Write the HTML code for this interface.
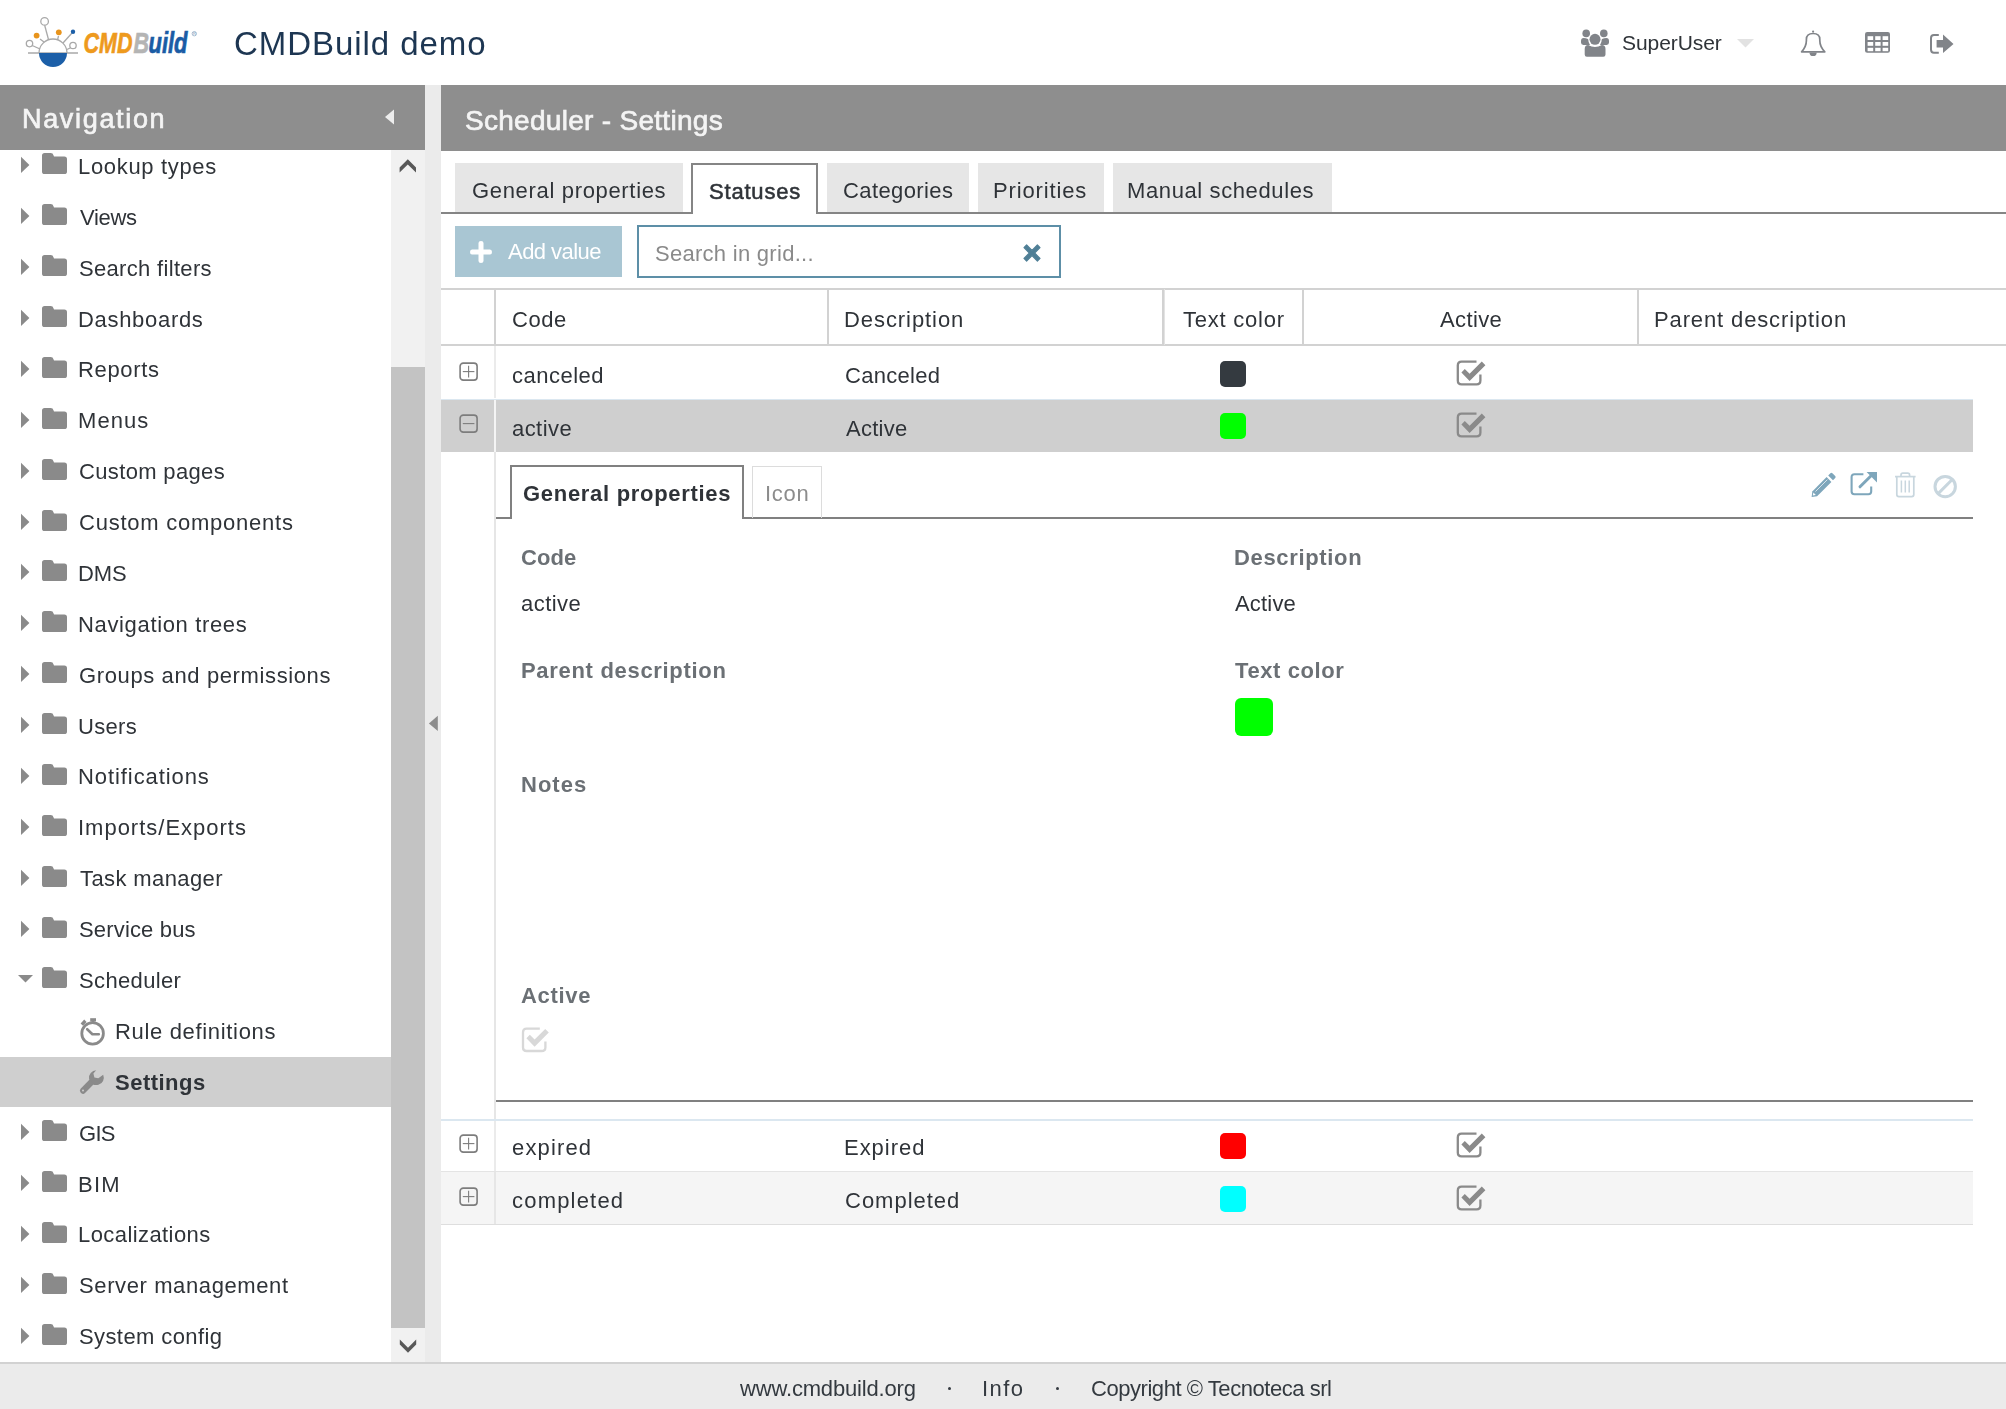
<!DOCTYPE html>
<html><head><meta charset="utf-8"><title>CMDBuild demo</title>
<style>
html,body{margin:0;padding:0;}
body{width:2006px;height:1409px;position:relative;overflow:hidden;background:#fff;font-family:'Liberation Sans', sans-serif;}
.t{position:absolute;white-space:pre;will-change:transform;}
.r{position:absolute;}
svg.i{position:absolute;overflow:visible;}
</style></head><body>
<svg class="i" style="left:20px;top:10px" width="190" height="65" viewBox="0 0 190 65">
<g stroke="#a9a9a9" stroke-width="1.3" fill="none">
<line x1="8" y1="43" x2="58" y2="43"/>
<path d="M19 43 A14 14 0 0 1 47 43"/>
<line x1="24.6" y1="15" x2="28.5" y2="29.5"/>
<line x1="20" y1="29" x2="24" y2="32"/>
<line x1="38.5" y1="26" x2="37.5" y2="30"/>
<line x1="52" y1="23" x2="43" y2="33"/>
<line x1="12.2" y1="35.5" x2="20" y2="39"/>
<line x1="50" y1="38" x2="47" y2="39.5"/>
<circle cx="24.6" cy="11.4" r="3.8" fill="#fff"/>
<circle cx="9.5" cy="33.6" r="3.2" fill="#fff"/>
<circle cx="53" cy="35.5" r="3.2" fill="#fff"/>
</g>
<path d="M19 43 A14 14 0 0 0 47 43 Z" fill="#1c5fa8"/>
<circle cx="16.6" cy="25.6" r="2.9" fill="#e8941c"/>
<circle cx="38.8" cy="22.3" r="2.9" fill="#e8941c"/>
<circle cx="53" cy="21.8" r="2.2" fill="#1c5fa8"/>
<text x="63.5" y="43.2" font-family="Liberation Sans" font-weight="700" font-style="italic" font-size="30" textLength="49" lengthAdjust="spacingAndGlyphs" fill="#ee9a1d" stroke="#ee9a1d" stroke-width="0.7">CMD</text>
<text x="113.5" y="43.2" font-family="Liberation Sans" font-weight="700" font-style="italic" font-size="30" textLength="15.5" lengthAdjust="spacingAndGlyphs" fill="#b4b4b4" stroke="#b4b4b4" stroke-width="0.7">B</text>
<text x="128.5" y="43.2" font-family="Liberation Sans" font-weight="700" font-style="italic" font-size="30" textLength="39" lengthAdjust="spacingAndGlyphs" fill="#1a5ca5" stroke="#1a5ca5" stroke-width="0.7">uild</text>
<circle cx="174.3" cy="23.7" r="2.2" fill="none" stroke="#6f93b5" stroke-width="0.6"/><text x="172.9" y="25.3" font-family="Liberation Sans" font-size="4" fill="#6f93b5">R</text>
</svg>
<svg class="i" style="left:1575px;top:25px" width="40" height="37" viewBox="0 0 40 37">
<circle cx="11.2" cy="8.4" r="3.8" fill="#818489"/>
<circle cx="28.8" cy="8.4" r="3.8" fill="#818489"/>
<path d="M6 16 Q6 13.1 8.6 13.1 Q10.6 13.1 13.6 14.2 Q13 17.5 15 20 H8.4 Q6 20 6 17.6 Z" fill="#818489"/>
<path d="M34 16 Q34 13.1 31.4 13.1 Q29.4 13.1 26.4 14.2 Q27 17.5 25 20 H31.6 Q34 20 34 17.6 Z" fill="#818489"/>
<circle cx="20" cy="14.3" r="6.6" fill="#fff"/>
<circle cx="20" cy="14.3" r="5.5" fill="#818489"/>
<path d="M9.7 24 Q9.7 20 13.2 20 Q16.5 22 20 22 Q23.5 22 26.8 20 Q30.5 20 30.5 24 V29.6 Q30.5 31.8 28.3 31.8 H11.9 Q9.7 31.8 9.7 29.6 Z" fill="#818489"/>
</svg>
<svg class="i" style="left:1736px;top:38px" width="20" height="10" viewBox="0 0 20 10"><path d="M1 1 H18 L9.5 9.5 Z" fill="#e2e2e2"/></svg>
<svg class="i" style="left:1795px;top:25px" width="40" height="37" viewBox="0 0 40 37">
<path d="M6.6 26.8 C9.6 23.6 11.4 20.2 11.4 15.6 V14.4 C11.4 10.4 14 8.5 18.1 8.5 C22.2 8.5 24.8 10.4 24.8 14.4 V15.6 C24.8 20.2 26.6 23.6 29.8 26.8 Z" fill="none" stroke="#818489" stroke-width="1.7" stroke-linejoin="round"/>
<circle cx="18.1" cy="6.6" r="1.1" fill="#818489"/>
<path d="M14.5 27.4 A3.6 3.6 0 0 0 21.7 27.4 Z" fill="#818489"/>
</svg>
<svg class="i" style="left:1865px;top:31px" width="26" height="23" viewBox="0 0 26 23">
<rect x="0" y="1" width="25" height="20.8" rx="2.2" fill="#818489"/>
<g fill="#fff"><rect x="2.6" y="5.2" width="5.6" height="3.8"/><rect x="2.6" y="11" width="5.6" height="3.8"/><rect x="2.6" y="16.8" width="5.6" height="3.4"/><rect x="10.2" y="5.2" width="5.4" height="3.8"/><rect x="10.2" y="11" width="5.4" height="3.8"/><rect x="10.2" y="16.8" width="5.4" height="3.4"/><rect x="17.6" y="5.2" width="5.6" height="3.8"/><rect x="17.6" y="11" width="5.6" height="3.8"/><rect x="17.6" y="16.8" width="5.6" height="3.4"/></g>
</svg>
<svg class="i" style="left:1928px;top:32px" width="28" height="23" viewBox="0 0 28 23">
<path d="M10.8 2.9 H6 Q3 2.9 3 6 V17.6 Q3 20.8 6 20.8 H10.8" fill="none" stroke="#818489" stroke-width="2"/>
<path d="M8.6 8 H15 V2.6 L25.5 11.9 L15 21 V15.4 H8.6 Z" fill="#818489"/>
</svg>
<div class="r" style="left:0px;top:85px;width:425px;height:65px;background:#8e8e8e;"></div>
<div class="r" style="left:441px;top:85px;width:1565px;height:66px;background:#8e8e8e;"></div>
<div class="r" style="left:425px;top:85px;width:16px;height:1277px;background:#ebebeb;"></div>
<svg class="i" style="left:383px;top:108px" width="13" height="19" viewBox="0 0 13 19"><path d="M11 1.5 V16.5 L2 9 Z" fill="#ededed"/></svg>
<div class="r" style="left:391px;top:150px;width:34px;height:1212px;background:#f1f1f1;"></div>
<div class="r" style="left:391px;top:367px;width:34px;height:961px;background:#c3c3c3;"></div>
<svg class="i" style="left:398px;top:157px" width="20" height="18" viewBox="0 0 20 18"><path d="M1.6 15.5 L9.8 7.4 L18 15.5 V10.5 L9.8 2.2 L1.6 10.5 Z" fill="#585858"/></svg>
<svg class="i" style="left:398px;top:1337px" width="20" height="18" viewBox="0 0 20 18"><path d="M1.8 2.6 L10 10.8 L18.2 2.6 V7.6 L10 15.8 L1.8 7.6 Z" fill="#585858"/></svg>
<svg class="i" style="left:427px;top:714px" width="13" height="19" viewBox="0 0 13 19"><path d="M10.8 1.8 V17 L1.9 9.4 Z" fill="#8c8c8c"/></svg>
<div class="r" style="left:0px;top:1057px;width:391px;height:50px;background:#cfcfcf;"></div>
<div class="r" style="left:0px;top:1362px;width:2006px;height:47px;background:#ebebeb;"></div>
<div class="r" style="left:0px;top:1362px;width:2006px;height:2px;background:#d2d2d2;"></div>
<svg class="i" style="left:20px;top:156px" width="11" height="18" viewBox="0 0 11 18"><path d="M1 0.8 L9.4 8.9 L1 17 Z" fill="#8a8a8a"/></svg>
<svg class="i" style="left:41px;top:152px" width="27" height="23" viewBox="0 0 27 23"><path d="M1 3.6 Q1 1 3.6 1 H9.6 Q12 1 12.6 3.4 L13 4.6 H23.3 Q26 4.6 26 7.3 V19.4 Q26 22 23.3 22 H3.6 Q1 22 1 19.4 Z" fill="#8a8a8a"/></svg>
<svg class="i" style="left:20px;top:207px" width="11" height="18" viewBox="0 0 11 18"><path d="M1 0.8 L9.4 8.9 L1 17 Z" fill="#8a8a8a"/></svg>
<svg class="i" style="left:41px;top:203px" width="27" height="23" viewBox="0 0 27 23"><path d="M1 3.6 Q1 1 3.6 1 H9.6 Q12 1 12.6 3.4 L13 4.6 H23.3 Q26 4.6 26 7.3 V19.4 Q26 22 23.3 22 H3.6 Q1 22 1 19.4 Z" fill="#8a8a8a"/></svg>
<svg class="i" style="left:20px;top:258px" width="11" height="18" viewBox="0 0 11 18"><path d="M1 0.8 L9.4 8.9 L1 17 Z" fill="#8a8a8a"/></svg>
<svg class="i" style="left:41px;top:254px" width="27" height="23" viewBox="0 0 27 23"><path d="M1 3.6 Q1 1 3.6 1 H9.6 Q12 1 12.6 3.4 L13 4.6 H23.3 Q26 4.6 26 7.3 V19.4 Q26 22 23.3 22 H3.6 Q1 22 1 19.4 Z" fill="#8a8a8a"/></svg>
<svg class="i" style="left:20px;top:309px" width="11" height="18" viewBox="0 0 11 18"><path d="M1 0.8 L9.4 8.9 L1 17 Z" fill="#8a8a8a"/></svg>
<svg class="i" style="left:41px;top:305px" width="27" height="23" viewBox="0 0 27 23"><path d="M1 3.6 Q1 1 3.6 1 H9.6 Q12 1 12.6 3.4 L13 4.6 H23.3 Q26 4.6 26 7.3 V19.4 Q26 22 23.3 22 H3.6 Q1 22 1 19.4 Z" fill="#8a8a8a"/></svg>
<svg class="i" style="left:20px;top:360px" width="11" height="18" viewBox="0 0 11 18"><path d="M1 0.8 L9.4 8.9 L1 17 Z" fill="#8a8a8a"/></svg>
<svg class="i" style="left:41px;top:356px" width="27" height="23" viewBox="0 0 27 23"><path d="M1 3.6 Q1 1 3.6 1 H9.6 Q12 1 12.6 3.4 L13 4.6 H23.3 Q26 4.6 26 7.3 V19.4 Q26 22 23.3 22 H3.6 Q1 22 1 19.4 Z" fill="#8a8a8a"/></svg>
<svg class="i" style="left:20px;top:411px" width="11" height="18" viewBox="0 0 11 18"><path d="M1 0.8 L9.4 8.9 L1 17 Z" fill="#8a8a8a"/></svg>
<svg class="i" style="left:41px;top:407px" width="27" height="23" viewBox="0 0 27 23"><path d="M1 3.6 Q1 1 3.6 1 H9.6 Q12 1 12.6 3.4 L13 4.6 H23.3 Q26 4.6 26 7.3 V19.4 Q26 22 23.3 22 H3.6 Q1 22 1 19.4 Z" fill="#8a8a8a"/></svg>
<svg class="i" style="left:20px;top:462px" width="11" height="18" viewBox="0 0 11 18"><path d="M1 0.8 L9.4 8.9 L1 17 Z" fill="#8a8a8a"/></svg>
<svg class="i" style="left:41px;top:458px" width="27" height="23" viewBox="0 0 27 23"><path d="M1 3.6 Q1 1 3.6 1 H9.6 Q12 1 12.6 3.4 L13 4.6 H23.3 Q26 4.6 26 7.3 V19.4 Q26 22 23.3 22 H3.6 Q1 22 1 19.4 Z" fill="#8a8a8a"/></svg>
<svg class="i" style="left:20px;top:513px" width="11" height="18" viewBox="0 0 11 18"><path d="M1 0.8 L9.4 8.9 L1 17 Z" fill="#8a8a8a"/></svg>
<svg class="i" style="left:41px;top:509px" width="27" height="23" viewBox="0 0 27 23"><path d="M1 3.6 Q1 1 3.6 1 H9.6 Q12 1 12.6 3.4 L13 4.6 H23.3 Q26 4.6 26 7.3 V19.4 Q26 22 23.3 22 H3.6 Q1 22 1 19.4 Z" fill="#8a8a8a"/></svg>
<svg class="i" style="left:20px;top:563px" width="11" height="18" viewBox="0 0 11 18"><path d="M1 0.8 L9.4 8.9 L1 17 Z" fill="#8a8a8a"/></svg>
<svg class="i" style="left:41px;top:559px" width="27" height="23" viewBox="0 0 27 23"><path d="M1 3.6 Q1 1 3.6 1 H9.6 Q12 1 12.6 3.4 L13 4.6 H23.3 Q26 4.6 26 7.3 V19.4 Q26 22 23.3 22 H3.6 Q1 22 1 19.4 Z" fill="#8a8a8a"/></svg>
<svg class="i" style="left:20px;top:614px" width="11" height="18" viewBox="0 0 11 18"><path d="M1 0.8 L9.4 8.9 L1 17 Z" fill="#8a8a8a"/></svg>
<svg class="i" style="left:41px;top:610px" width="27" height="23" viewBox="0 0 27 23"><path d="M1 3.6 Q1 1 3.6 1 H9.6 Q12 1 12.6 3.4 L13 4.6 H23.3 Q26 4.6 26 7.3 V19.4 Q26 22 23.3 22 H3.6 Q1 22 1 19.4 Z" fill="#8a8a8a"/></svg>
<svg class="i" style="left:20px;top:665px" width="11" height="18" viewBox="0 0 11 18"><path d="M1 0.8 L9.4 8.9 L1 17 Z" fill="#8a8a8a"/></svg>
<svg class="i" style="left:41px;top:661px" width="27" height="23" viewBox="0 0 27 23"><path d="M1 3.6 Q1 1 3.6 1 H9.6 Q12 1 12.6 3.4 L13 4.6 H23.3 Q26 4.6 26 7.3 V19.4 Q26 22 23.3 22 H3.6 Q1 22 1 19.4 Z" fill="#8a8a8a"/></svg>
<svg class="i" style="left:20px;top:716px" width="11" height="18" viewBox="0 0 11 18"><path d="M1 0.8 L9.4 8.9 L1 17 Z" fill="#8a8a8a"/></svg>
<svg class="i" style="left:41px;top:712px" width="27" height="23" viewBox="0 0 27 23"><path d="M1 3.6 Q1 1 3.6 1 H9.6 Q12 1 12.6 3.4 L13 4.6 H23.3 Q26 4.6 26 7.3 V19.4 Q26 22 23.3 22 H3.6 Q1 22 1 19.4 Z" fill="#8a8a8a"/></svg>
<svg class="i" style="left:20px;top:767px" width="11" height="18" viewBox="0 0 11 18"><path d="M1 0.8 L9.4 8.9 L1 17 Z" fill="#8a8a8a"/></svg>
<svg class="i" style="left:41px;top:763px" width="27" height="23" viewBox="0 0 27 23"><path d="M1 3.6 Q1 1 3.6 1 H9.6 Q12 1 12.6 3.4 L13 4.6 H23.3 Q26 4.6 26 7.3 V19.4 Q26 22 23.3 22 H3.6 Q1 22 1 19.4 Z" fill="#8a8a8a"/></svg>
<svg class="i" style="left:20px;top:818px" width="11" height="18" viewBox="0 0 11 18"><path d="M1 0.8 L9.4 8.9 L1 17 Z" fill="#8a8a8a"/></svg>
<svg class="i" style="left:41px;top:814px" width="27" height="23" viewBox="0 0 27 23"><path d="M1 3.6 Q1 1 3.6 1 H9.6 Q12 1 12.6 3.4 L13 4.6 H23.3 Q26 4.6 26 7.3 V19.4 Q26 22 23.3 22 H3.6 Q1 22 1 19.4 Z" fill="#8a8a8a"/></svg>
<svg class="i" style="left:20px;top:869px" width="11" height="18" viewBox="0 0 11 18"><path d="M1 0.8 L9.4 8.9 L1 17 Z" fill="#8a8a8a"/></svg>
<svg class="i" style="left:41px;top:865px" width="27" height="23" viewBox="0 0 27 23"><path d="M1 3.6 Q1 1 3.6 1 H9.6 Q12 1 12.6 3.4 L13 4.6 H23.3 Q26 4.6 26 7.3 V19.4 Q26 22 23.3 22 H3.6 Q1 22 1 19.4 Z" fill="#8a8a8a"/></svg>
<svg class="i" style="left:20px;top:920px" width="11" height="18" viewBox="0 0 11 18"><path d="M1 0.8 L9.4 8.9 L1 17 Z" fill="#8a8a8a"/></svg>
<svg class="i" style="left:41px;top:916px" width="27" height="23" viewBox="0 0 27 23"><path d="M1 3.6 Q1 1 3.6 1 H9.6 Q12 1 12.6 3.4 L13 4.6 H23.3 Q26 4.6 26 7.3 V19.4 Q26 22 23.3 22 H3.6 Q1 22 1 19.4 Z" fill="#8a8a8a"/></svg>
<svg class="i" style="left:17px;top:973px" width="18" height="10" viewBox="0 0 18 10"><path d="M1 2 H16 L8.5 9.5 Z" fill="#8a8a8a"/></svg>
<svg class="i" style="left:41px;top:966px" width="27" height="23" viewBox="0 0 27 23"><path d="M1 3.6 Q1 1 3.6 1 H9.6 Q12 1 12.6 3.4 L13 4.6 H23.3 Q26 4.6 26 7.3 V19.4 Q26 22 23.3 22 H3.6 Q1 22 1 19.4 Z" fill="#8a8a8a"/></svg>
<svg class="i" style="left:20px;top:1123px" width="11" height="18" viewBox="0 0 11 18"><path d="M1 0.8 L9.4 8.9 L1 17 Z" fill="#8a8a8a"/></svg>
<svg class="i" style="left:41px;top:1119px" width="27" height="23" viewBox="0 0 27 23"><path d="M1 3.6 Q1 1 3.6 1 H9.6 Q12 1 12.6 3.4 L13 4.6 H23.3 Q26 4.6 26 7.3 V19.4 Q26 22 23.3 22 H3.6 Q1 22 1 19.4 Z" fill="#8a8a8a"/></svg>
<svg class="i" style="left:20px;top:1174px" width="11" height="18" viewBox="0 0 11 18"><path d="M1 0.8 L9.4 8.9 L1 17 Z" fill="#8a8a8a"/></svg>
<svg class="i" style="left:41px;top:1170px" width="27" height="23" viewBox="0 0 27 23"><path d="M1 3.6 Q1 1 3.6 1 H9.6 Q12 1 12.6 3.4 L13 4.6 H23.3 Q26 4.6 26 7.3 V19.4 Q26 22 23.3 22 H3.6 Q1 22 1 19.4 Z" fill="#8a8a8a"/></svg>
<svg class="i" style="left:20px;top:1225px" width="11" height="18" viewBox="0 0 11 18"><path d="M1 0.8 L9.4 8.9 L1 17 Z" fill="#8a8a8a"/></svg>
<svg class="i" style="left:41px;top:1221px" width="27" height="23" viewBox="0 0 27 23"><path d="M1 3.6 Q1 1 3.6 1 H9.6 Q12 1 12.6 3.4 L13 4.6 H23.3 Q26 4.6 26 7.3 V19.4 Q26 22 23.3 22 H3.6 Q1 22 1 19.4 Z" fill="#8a8a8a"/></svg>
<svg class="i" style="left:20px;top:1276px" width="11" height="18" viewBox="0 0 11 18"><path d="M1 0.8 L9.4 8.9 L1 17 Z" fill="#8a8a8a"/></svg>
<svg class="i" style="left:41px;top:1272px" width="27" height="23" viewBox="0 0 27 23"><path d="M1 3.6 Q1 1 3.6 1 H9.6 Q12 1 12.6 3.4 L13 4.6 H23.3 Q26 4.6 26 7.3 V19.4 Q26 22 23.3 22 H3.6 Q1 22 1 19.4 Z" fill="#8a8a8a"/></svg>
<svg class="i" style="left:20px;top:1327px" width="11" height="18" viewBox="0 0 11 18"><path d="M1 0.8 L9.4 8.9 L1 17 Z" fill="#8a8a8a"/></svg>
<svg class="i" style="left:41px;top:1323px" width="27" height="23" viewBox="0 0 27 23"><path d="M1 3.6 Q1 1 3.6 1 H9.6 Q12 1 12.6 3.4 L13 4.6 H23.3 Q26 4.6 26 7.3 V19.4 Q26 22 23.3 22 H3.6 Q1 22 1 19.4 Z" fill="#8a8a8a"/></svg>
<svg class="i" style="left:78px;top:1016px" width="30" height="32" viewBox="0 0 30 32">
<circle cx="14.6" cy="17.4" r="10.8" fill="none" stroke="#8a8a8a" stroke-width="2.8"/>
<rect x="12.2" y="2.2" width="5.8" height="3.2" fill="#8a8a8a"/>
<rect x="13.6" y="4.4" width="2.8" height="2.4" fill="#8a8a8a"/>
<path d="M2.6 7.4 L6.2 3.6 L8.6 6 L5 9.8 Z" fill="#8a8a8a"/>
<path d="M9.2 13.2 L14.4 18.2 L20.8 18.2" fill="none" stroke="#8a8a8a" stroke-width="2.6" stroke-linecap="round" stroke-linejoin="round"/>
</svg>
<svg class="i" style="left:78px;top:1068px" width="28" height="29" viewBox="0 0 28 29">
<path d="M25.2 6.8 A7.4 7.4 0 1 1 18.2 2.3 L15.4 5.6 L16.4 9.4 L20.3 10.2 Z" fill="#8a8a8a"/>
<path d="M11.6 11.4 L2.6 20.8 Q1 22.6 2.6 24.4 L3.4 25.2 Q5.2 26.8 7 25 L16.2 15.8 Z" fill="#8a8a8a"/>
<circle cx="5" cy="22.6" r="1" fill="#cfcfcf"/>
</svg>
<div class="r" style="left:455px;top:163px;width:228px;height:50px;background:#e6e6e6;"></div>
<div class="r" style="left:827px;top:163px;width:142px;height:50px;background:#e6e6e6;"></div>
<div class="r" style="left:978px;top:163px;width:126px;height:50px;background:#e6e6e6;"></div>
<div class="r" style="left:1113px;top:163px;width:219px;height:50px;background:#e6e6e6;"></div>
<div class="r" style="left:441px;top:212px;width:251px;height:2px;background:#858585;"></div>
<div class="r" style="left:818px;top:212px;width:1188px;height:2px;background:#858585;"></div>
<div class="r" style="left:691px;top:163px;width:2px;height:51px;background:#858585;"></div>
<div class="r" style="left:816px;top:163px;width:2px;height:51px;background:#858585;"></div>
<div class="r" style="left:691px;top:163px;width:127px;height:2px;background:#858585;"></div>
<div class="r" style="left:455px;top:226px;width:167px;height:51px;background:#a9c6d3;"></div>
<svg class="i" style="left:468px;top:239px" width="26" height="26" viewBox="0 0 26 26"><path d="M10.5 4 Q10.5 2 13 2 Q15.5 2 15.5 4 V10.5 H22 Q24 10.5 24 13 Q24 15.5 22 15.5 H15.5 V22 Q15.5 24 13 24 Q10.5 24 10.5 22 V15.5 H4 Q2 15.5 2 13 Q2 10.5 4 10.5 H10.5 Z" fill="#fff"/></svg>
<div class="r" style="left:637px;top:225px;width:424px;height:53px;background:#fff;box-sizing:border-box;border:2px solid #5d8fa7;"></div>
<svg class="i" style="left:1020px;top:241px" width="24" height="22" viewBox="0 0 24 22"><path d="M4 6.6 L6.6 4 L12 9.4 L17.4 4 L20 6.6 L14.6 12 L20 17.4 L17.4 20 L12 14.6 L6.6 20 L4 17.4 L9.4 12 Z" fill="#4f7f96" stroke="#4f7f96" stroke-width="1.2" stroke-linejoin="round"/></svg>
<div class="r" style="left:441px;top:288px;width:1565px;height:2px;background:#d2d2d2;"></div>
<div class="r" style="left:441px;top:344px;width:1565px;height:2px;background:#d2d2d2;"></div>
<div class="r" style="left:494px;top:289px;width:2px;height:56px;background:#d2d2d2;"></div>
<div class="r" style="left:827px;top:289px;width:2px;height:56px;background:#d2d2d2;"></div>
<div class="r" style="left:1162px;top:289px;width:2px;height:56px;background:#d2d2d2;"></div>
<div class="r" style="left:1302px;top:289px;width:2px;height:56px;background:#d2d2d2;"></div>
<div class="r" style="left:1637px;top:289px;width:2px;height:56px;background:#d2d2d2;"></div>
<div class="r" style="left:1164px;top:289px;width:1px;height:56px;background:#e3e3e3;"></div>
<div class="r" style="left:494px;top:346px;width:2px;height:52px;background:#ebebeb;"></div>
<svg class="i" style="left:459px;top:362px" width="20" height="20" viewBox="0 0 20 20"><rect x="1.1" y="1.1" width="17" height="17" rx="3.2" fill="none" stroke="#7d7d7d" stroke-width="1.6"/><line x1="3.8" y1="9.6" x2="15.4" y2="9.6" stroke="#7d7d7d" stroke-width="1.1"/><line x1="9.6" y1="3.8" x2="9.6" y2="15.4" stroke="#7d7d7d" stroke-width="1.1"/></svg>
<div class="r" style="left:1220px;top:361px;width:26px;height:26px;background:#343a40;border-radius:5px;"></div>
<svg class="i" style="left:1456px;top:360px" width="31" height="27" viewBox="0 0 31 27">
<path d="M20.5 1.6 H5.6 Q1.8 1.6 1.8 5.4 V20.6 Q1.8 24.4 5.6 24.4 H20.6 Q24.4 24.4 24.4 20.6 V14.4" fill="none" stroke="#8a8a8a" stroke-width="2.3"/>
<path d="M5.4 11.2 L8.8 7.8 L13.6 12.6 L25.8 0.4 L29.4 4 L13.6 19.8 Z" fill="#8a8a8a" transform="translate(0,1.2)"/></svg>
<div class="r" style="left:441px;top:399px;width:1532px;height:1px;background:#dbe7f0;"></div>
<div class="r" style="left:441px;top:400px;width:1532px;height:52px;background:#cfcfcf;"></div>
<div class="r" style="left:494px;top:400px;width:2px;height:52px;background:#f4f4f4;"></div>
<svg class="i" style="left:459px;top:414px" width="20" height="20" viewBox="0 0 20 20"><rect x="1.1" y="1.1" width="17" height="17" rx="3.2" fill="none" stroke="#7d7d7d" stroke-width="1.6"/><line x1="3.8" y1="9.6" x2="15.4" y2="9.6" stroke="#7d7d7d" stroke-width="1.1"/></svg>
<div class="r" style="left:1220px;top:413px;width:26px;height:26px;background:#00ff00;border-radius:5px;"></div>
<svg class="i" style="left:1456px;top:412px" width="31" height="27" viewBox="0 0 31 27">
<path d="M20.5 1.6 H5.6 Q1.8 1.6 1.8 5.4 V20.6 Q1.8 24.4 5.6 24.4 H20.6 Q24.4 24.4 24.4 20.6 V14.4" fill="none" stroke="#8a8a8a" stroke-width="2.3"/>
<path d="M5.4 11.2 L8.8 7.8 L13.6 12.6 L25.8 0.4 L29.4 4 L13.6 19.8 Z" fill="#8a8a8a" transform="translate(0,1.2)"/></svg>
<div class="r" style="left:494px;top:452px;width:2px;height:668px;background:#e6e6e6;"></div>
<div class="r" style="left:496px;top:517px;width:15px;height:2px;background:#808080;"></div>
<div class="r" style="left:743px;top:517px;width:1230px;height:2px;background:#808080;"></div>
<div class="r" style="left:510px;top:465px;width:2px;height:54px;background:#808080;"></div>
<div class="r" style="left:742px;top:465px;width:2px;height:54px;background:#808080;"></div>
<div class="r" style="left:510px;top:465px;width:234px;height:2px;background:#808080;"></div>
<div class="r" style="left:752px;top:466px;width:70px;height:52px;background:transparent;box-sizing:border-box;border:1.5px solid #dcdcdc;border-bottom:none;"></div>
<svg class="i" style="left:1810px;top:472px" width="27" height="27" viewBox="0 0 27 27">
<path d="M2.3 19.4 L16.6 5.1 L21.4 9.9 L7.1 24.2 L1.6 24.9 Z" fill="#7ea6bb"/>
<path d="M18.2 3.5 L20.4 1.3 Q21.4 0.3 22.4 1.3 L25.2 4.1 Q26.2 5.1 25.2 6.1 L23 8.3 Z" fill="#7ea6bb"/>
<line x1="5.5" y1="19.5" x2="17.4" y2="7.6" stroke="#fff" stroke-width="0.7"/>
<path d="M3.4 20.6 L5.8 23 L2.8 23.6 Z" fill="#fff"/>
</svg>
<svg class="i" style="left:1849px;top:470px" width="30" height="27" viewBox="0 0 30 27">
<path d="M14.4 4.2 H5.4 Q2.6 4.2 2.6 7 V21.6 Q2.6 24.2 5.4 24.2 H19.4 Q22.2 24.2 22.2 21.6 V16.6" fill="none" stroke="#7ea6bb" stroke-width="2.1"/>
<path d="M11 16.8 L21.6 6.2" stroke="#7ea6bb" stroke-width="3" stroke-linecap="round"/>
<path d="M17.6 2 H28 V12.4 Z" fill="#7ea6bb"/>
</svg>
<svg class="i" style="left:1893px;top:472px" width="24" height="27" viewBox="0 0 24 27">
<path d="M2 4.6 H22.6" stroke="#c8d6de" stroke-width="1.7"/>
<path d="M8 4.4 V3 Q8 1.2 9.8 1.2 H14.8 Q16.6 1.2 16.6 3 V4.4" fill="none" stroke="#c8d6de" stroke-width="1.7"/>
<path d="M3.8 5 V22.6 Q3.8 24.6 5.8 24.6 H18.8 Q20.8 24.6 20.8 22.6 V5" fill="none" stroke="#c8d6de" stroke-width="1.7"/>
<path d="M8.4 8.6 V20.4 M12.3 8.6 V20.4 M16.2 8.6 V20.4" stroke="#c8d6de" stroke-width="1.5"/>
</svg>
<svg class="i" style="left:1932px;top:474px" width="26" height="26" viewBox="0 0 26 26">
<circle cx="13.2" cy="12.6" r="10.2" fill="none" stroke="#c8d6de" stroke-width="3"/>
<path d="M6.4 19.4 L20 5.8" stroke="#c8d6de" stroke-width="3"/>
</svg>
<div class="r" style="left:1235px;top:698px;width:38px;height:38px;background:#00ff00;border-radius:6px;"></div>
<svg class="i" style="left:521px;top:1026px" width="31" height="28" viewBox="0 0 31 28">
<path d="M18.8 2.6 H5.6 Q2 2.6 2 6.2 V21.4 Q2 25 5.6 25 H20.6 Q24.4 25 24.4 21.4 V15.6" fill="none" stroke="#d8d8d8" stroke-width="2.3"/>
<path d="M5.4 12.2 L8.8 8.8 L13.6 13.6 L24.2 3 L27.8 6.6 L13.6 20.8 Z" fill="#d8d8d8"/></svg>
<div class="r" style="left:496px;top:1100px;width:1477px;height:2px;background:#808080;"></div>
<div class="r" style="left:441px;top:1119px;width:1532px;height:2px;background:#dbe7f0;"></div>
<div class="r" style="left:494px;top:1121px;width:2px;height:50px;background:#ebebeb;"></div>
<div class="r" style="left:441px;top:1171px;width:1532px;height:1px;background:#e4e4e4;"></div>
<svg class="i" style="left:459px;top:1134px" width="20" height="20" viewBox="0 0 20 20"><rect x="1.1" y="1.1" width="17" height="17" rx="3.2" fill="none" stroke="#7d7d7d" stroke-width="1.6"/><line x1="3.8" y1="9.6" x2="15.4" y2="9.6" stroke="#7d7d7d" stroke-width="1.1"/><line x1="9.6" y1="3.8" x2="9.6" y2="15.4" stroke="#7d7d7d" stroke-width="1.1"/></svg>
<div class="r" style="left:1220px;top:1133px;width:26px;height:26px;background:#ff0000;border-radius:5px;"></div>
<svg class="i" style="left:1456px;top:1132px" width="31" height="27" viewBox="0 0 31 27">
<path d="M20.5 1.6 H5.6 Q1.8 1.6 1.8 5.4 V20.6 Q1.8 24.4 5.6 24.4 H20.6 Q24.4 24.4 24.4 20.6 V14.4" fill="none" stroke="#8a8a8a" stroke-width="2.3"/>
<path d="M5.4 11.2 L8.8 7.8 L13.6 12.6 L25.8 0.4 L29.4 4 L13.6 19.8 Z" fill="#8a8a8a" transform="translate(0,1.2)"/></svg>
<div class="r" style="left:441px;top:1172px;width:1532px;height:52px;background:#f5f5f5;"></div>
<div class="r" style="left:494px;top:1172px;width:2px;height:52px;background:#e6e6e6;"></div>
<div class="r" style="left:441px;top:1224px;width:1532px;height:1px;background:#dedede;"></div>
<svg class="i" style="left:459px;top:1187px" width="20" height="20" viewBox="0 0 20 20"><rect x="1.1" y="1.1" width="17" height="17" rx="3.2" fill="none" stroke="#7d7d7d" stroke-width="1.6"/><line x1="3.8" y1="9.6" x2="15.4" y2="9.6" stroke="#7d7d7d" stroke-width="1.1"/><line x1="9.6" y1="3.8" x2="9.6" y2="15.4" stroke="#7d7d7d" stroke-width="1.1"/></svg>
<div class="r" style="left:1220px;top:1186px;width:26px;height:26px;background:#00ffff;border-radius:5px;"></div>
<svg class="i" style="left:1456px;top:1185px" width="31" height="27" viewBox="0 0 31 27">
<path d="M20.5 1.6 H5.6 Q1.8 1.6 1.8 5.4 V20.6 Q1.8 24.4 5.6 24.4 H20.6 Q24.4 24.4 24.4 20.6 V14.4" fill="none" stroke="#8a8a8a" stroke-width="2.3"/>
<path d="M5.4 11.2 L8.8 7.8 L13.6 12.6 L25.8 0.4 L29.4 4 L13.6 19.8 Z" fill="#8a8a8a" transform="translate(0,1.2)"/></svg>
<div class="r" style="left:948px;top:1387px;width:3px;height:3px;background:#343a40;border-radius:2px;"></div>
<div class="r" style="left:1056px;top:1387px;width:3px;height:3px;background:#343a40;border-radius:2px;"></div>
<span class="t" style="left:234.4px;top:27px;font-size:33px;line-height:33px;font-weight:400;color:#1d3652;letter-spacing:0.95px;">CMDBuild demo</span><span class="t" style="left:1621.6px;top:32px;font-size:21px;line-height:21px;font-weight:400;color:#2f3338;letter-spacing:-0.07px;">SuperUser</span><span class="t" style="left:22.3px;top:106px;font-size:27px;line-height:27px;font-weight:400;color:#f4f4f4;letter-spacing:1.67px;-webkit-text-stroke:0.68px #f4f4f4;">Navigation</span><span class="t" style="left:465.0px;top:107px;font-size:28px;line-height:28px;font-weight:400;color:#f4f4f4;letter-spacing:0.29px;-webkit-text-stroke:0.70px #f4f4f4;">Scheduler - Settings</span><span class="t" style="left:77.6px;top:156px;font-size:22px;line-height:22px;font-weight:400;color:#2f3338;letter-spacing:0.67px;">Lookup types</span><span class="t" style="left:79.6px;top:207px;font-size:22px;line-height:22px;font-weight:400;color:#2f3338;letter-spacing:-0.32px;">Views</span><span class="t" style="left:78.6px;top:258px;font-size:22px;line-height:22px;font-weight:400;color:#2f3338;letter-spacing:0.32px;">Search filters</span><span class="t" style="left:77.6px;top:309px;font-size:22px;line-height:22px;font-weight:400;color:#2f3338;letter-spacing:0.69px;">Dashboards</span><span class="t" style="left:77.6px;top:359px;font-size:22px;line-height:22px;font-weight:400;color:#2f3338;letter-spacing:0.65px;">Reports</span><span class="t" style="left:77.6px;top:410px;font-size:22px;line-height:22px;font-weight:400;color:#2f3338;letter-spacing:1.08px;">Menus</span><span class="t" style="left:78.6px;top:461px;font-size:22px;line-height:22px;font-weight:400;color:#2f3338;letter-spacing:0.35px;">Custom pages</span><span class="t" style="left:78.6px;top:512px;font-size:22px;line-height:22px;font-weight:400;color:#2f3338;letter-spacing:0.76px;">Custom components</span><span class="t" style="left:77.6px;top:563px;font-size:22px;line-height:22px;font-weight:400;color:#2f3338;letter-spacing:-0.05px;">DMS</span><span class="t" style="left:77.6px;top:614px;font-size:22px;line-height:22px;font-weight:400;color:#2f3338;letter-spacing:0.65px;">Navigation trees</span><span class="t" style="left:78.6px;top:665px;font-size:22px;line-height:22px;font-weight:400;color:#2f3338;letter-spacing:0.62px;">Groups and permissions</span><span class="t" style="left:77.6px;top:716px;font-size:22px;line-height:22px;font-weight:400;color:#2f3338;letter-spacing:0.30px;">Users</span><span class="t" style="left:77.6px;top:766px;font-size:22px;line-height:22px;font-weight:400;color:#2f3338;letter-spacing:0.92px;">Notifications</span><span class="t" style="left:77.6px;top:817px;font-size:22px;line-height:22px;font-weight:400;color:#2f3338;letter-spacing:0.99px;">Imports/Exports</span><span class="t" style="left:79.6px;top:868px;font-size:22px;line-height:22px;font-weight:400;color:#2f3338;letter-spacing:0.40px;">Task manager</span><span class="t" style="left:78.6px;top:919px;font-size:22px;line-height:22px;font-weight:400;color:#2f3338;letter-spacing:0.16px;">Service bus</span><span class="t" style="left:78.6px;top:970px;font-size:22px;line-height:22px;font-weight:400;color:#2f3338;letter-spacing:0.36px;">Scheduler</span><span class="t" style="left:114.7px;top:1021px;font-size:22px;line-height:22px;font-weight:400;color:#2f3338;letter-spacing:0.67px;">Rule definitions</span><span class="t" style="left:115.0px;top:1072px;font-size:22px;line-height:22px;font-weight:700;color:#2f3338;letter-spacing:0.49px;">Settings</span><span class="t" style="left:78.6px;top:1123px;font-size:22px;line-height:22px;font-weight:400;color:#2f3338;letter-spacing:-0.70px;">GIS</span><span class="t" style="left:77.6px;top:1174px;font-size:22px;line-height:22px;font-weight:400;color:#2f3338;letter-spacing:1.25px;">BIM</span><span class="t" style="left:77.6px;top:1224px;font-size:22px;line-height:22px;font-weight:400;color:#2f3338;letter-spacing:0.42px;">Localizations</span><span class="t" style="left:78.6px;top:1275px;font-size:22px;line-height:22px;font-weight:400;color:#2f3338;letter-spacing:0.61px;">Server management</span><span class="t" style="left:78.6px;top:1326px;font-size:22px;line-height:22px;font-weight:400;color:#2f3338;letter-spacing:0.40px;">System config</span><span class="t" style="left:471.9px;top:180px;font-size:22px;line-height:22px;font-weight:400;color:#2f3338;letter-spacing:0.67px;">General properties</span><span class="t" style="left:709.2px;top:181px;font-size:22px;line-height:22px;font-weight:400;color:#2f3338;letter-spacing:0.81px;-webkit-text-stroke:0.55px #2f3338;">Statuses</span><span class="t" style="left:842.7px;top:180px;font-size:22px;line-height:22px;font-weight:400;color:#2f3338;letter-spacing:0.39px;">Categories</span><span class="t" style="left:993.3px;top:180px;font-size:22px;line-height:22px;font-weight:400;color:#2f3338;letter-spacing:0.86px;">Priorities</span><span class="t" style="left:1127.4px;top:180px;font-size:22px;line-height:22px;font-weight:400;color:#2f3338;letter-spacing:0.61px;">Manual schedules</span><span class="t" style="left:508.4px;top:241px;font-size:22px;line-height:22px;font-weight:400;color:#ffffff;letter-spacing:-0.54px;">Add value</span><span class="t" style="left:655.4px;top:243px;font-size:22px;line-height:22px;font-weight:400;color:#8a8a8a;letter-spacing:0.28px;">Search in grid...</span><span class="t" style="left:512.2px;top:309px;font-size:22px;line-height:22px;font-weight:400;color:#2f3338;letter-spacing:0.53px;">Code</span><span class="t" style="left:844.1px;top:309px;font-size:22px;line-height:22px;font-weight:400;color:#2f3338;letter-spacing:0.93px;">Description</span><span class="t" style="left:1183.1px;top:309px;font-size:22px;line-height:22px;font-weight:400;color:#2f3338;letter-spacing:0.77px;">Text color</span><span class="t" style="left:1439.7px;top:309px;font-size:22px;line-height:22px;font-weight:400;color:#2f3338;letter-spacing:0.38px;">Active</span><span class="t" style="left:1653.6px;top:309px;font-size:22px;line-height:22px;font-weight:400;color:#2f3338;letter-spacing:0.87px;">Parent description</span><span class="t" style="left:512.0px;top:365px;font-size:22px;line-height:22px;font-weight:400;color:#2f3338;letter-spacing:0.50px;">canceled</span><span class="t" style="left:844.7px;top:365px;font-size:22px;line-height:22px;font-weight:400;color:#2f3338;letter-spacing:0.29px;">Canceled</span><span class="t" style="left:512.0px;top:418px;font-size:22px;line-height:22px;font-weight:400;color:#2f3338;letter-spacing:0.44px;">active</span><span class="t" style="left:845.7px;top:418px;font-size:22px;line-height:22px;font-weight:400;color:#2f3338;letter-spacing:0.26px;">Active</span><span class="t" style="left:511.8px;top:1137px;font-size:22px;line-height:22px;font-weight:400;color:#2f3338;letter-spacing:1.15px;">expired</span><span class="t" style="left:843.8px;top:1137px;font-size:22px;line-height:22px;font-weight:400;color:#2f3338;letter-spacing:0.97px;">Expired</span><span class="t" style="left:511.8px;top:1190px;font-size:22px;line-height:22px;font-weight:400;color:#2f3338;letter-spacing:1.20px;">completed</span><span class="t" style="left:844.8px;top:1190px;font-size:22px;line-height:22px;font-weight:400;color:#2f3338;letter-spacing:0.99px;">Completed</span><span class="t" style="left:523.0px;top:483px;font-size:22px;line-height:22px;font-weight:700;color:#2f3338;letter-spacing:0.70px;">General properties</span><span class="t" style="left:765.4px;top:483px;font-size:22px;line-height:22px;font-weight:400;color:#8c8c8c;letter-spacing:0.73px;">Icon</span><span class="t" style="left:521.3px;top:547px;font-size:22px;line-height:22px;font-weight:700;color:#6b7075;letter-spacing:0.10px;">Code</span><span class="t" style="left:521.3px;top:593px;font-size:22px;line-height:22px;font-weight:400;color:#2f3338;letter-spacing:0.46px;">active</span><span class="t" style="left:1234.1px;top:547px;font-size:22px;line-height:22px;font-weight:700;color:#6b7075;letter-spacing:0.66px;">Description</span><span class="t" style="left:1235.0px;top:593px;font-size:22px;line-height:22px;font-weight:400;color:#2f3338;letter-spacing:0.18px;">Active</span><span class="t" style="left:521.3px;top:660px;font-size:22px;line-height:22px;font-weight:700;color:#6b7075;letter-spacing:0.69px;">Parent description</span><span class="t" style="left:1235.0px;top:660px;font-size:22px;line-height:22px;font-weight:700;color:#6b7075;letter-spacing:0.59px;">Text color</span><span class="t" style="left:521.0px;top:774px;font-size:22px;line-height:22px;font-weight:700;color:#6b7075;letter-spacing:1.00px;">Notes</span><span class="t" style="left:520.8px;top:985px;font-size:22px;line-height:22px;font-weight:700;color:#6b7075;letter-spacing:0.70px;">Active</span><span class="t" style="left:740.1px;top:1378px;font-size:22px;line-height:22px;font-weight:400;color:#343a40;letter-spacing:-0.17px;">www.cmdbuild.org</span><span class="t" style="left:982.4px;top:1378px;font-size:22px;line-height:22px;font-weight:400;color:#343a40;letter-spacing:1.43px;">Info</span><span class="t" style="left:1090.8px;top:1378px;font-size:22px;line-height:22px;font-weight:400;color:#343a40;letter-spacing:-0.45px;">Copyright © Tecnoteca srl</span>
</body></html>
